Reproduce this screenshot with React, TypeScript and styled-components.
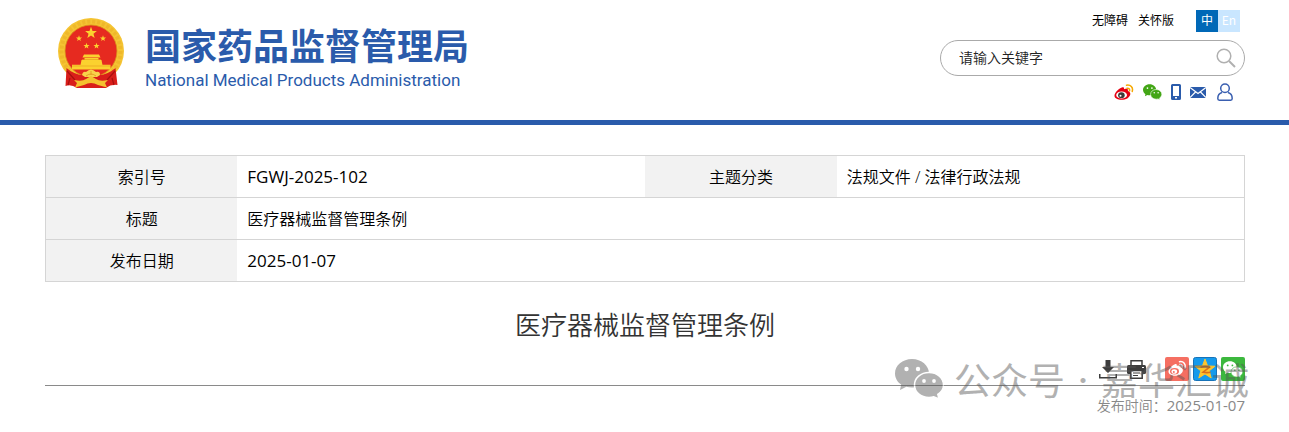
import React from "react";
import styled, { createGlobalStyle } from "styled-components";

const Global = createGlobalStyle`
  *, *::before, *::after { box-sizing: border-box; }
  body {
    margin: 0;
    background: #fff;
    color: #000;
    font-family: "Open Sans", "Noto Sans CJK SC", sans-serif;
    font-size: 16px;
  }
  a { color: inherit; text-decoration: none; }
  svg { display: block; }
`;

const Header = styled.header`
  display: flex;
  justify-content: space-between;
  height: 125px;
  padding: 10px 44px 0 45px;
  border-bottom: 5px solid #2a5bab;
`;

const Brand = styled.a`
  display: flex;
  align-items: flex-start;
  gap: 20px;
  padding: 8px 0 0 13px;
  color: #2a5bab;
`;

const BrandText = styled.div`
  display: flex;
  flex-direction: column;
  gap: 2px;
`;

const BrandName = styled.span`
  font: 700 36px/48px "Noto Sans CJK SC", sans-serif;
  white-space: nowrap;
  margin-top: 2px;
`;

const BrandLatin = styled.span`
  font: 400 17px/20px Roboto, sans-serif;
  white-space: nowrap;
`;

const Tools = styled.div`
  display: flex;
  flex-direction: column;
  width: 305px;
`;

const TopLinks = styled.nav`
  display: flex;
  justify-content: flex-end;
  align-items: flex-start;
  gap: 10px;
  height: 22px;
  padding-right: 5px;
  font: 400 12px/20px "Noto Sans CJK SC", sans-serif;
`;

const Languages = styled.div`
  display: flex;
  margin-left: 12px;
`;

const Language = styled.a<{ $active?: boolean }>`
  width: 22px;
  height: 22px;
  text-align: center;
  color: #fff;
  background: ${(p) => (p.$active ? "#0068b7" : "#c9e6ff")};
`;

const Search = styled.form`
  display: flex;
  align-items: center;
  height: 36px;
  margin-top: 8px;
  padding: 0 8px 0 18px;
  border: 1px solid #aaa;
  border-radius: 18px;
`;

const SearchInput = styled.input`
  flex: 1;
  min-width: 0;
  padding: 0 0 2px;
  border: 0;
  outline: 0;
  background: none;
  font: 350 14px/20px "Noto Sans CJK SC", sans-serif;
  color: #222;
  &::placeholder { color: #222; opacity: 1; }
`;

const IconButton = styled.button`
  display: block;
  padding: 0;
  border: 0;
  background: none;
  cursor: pointer;
`;

const Socials = styled.div`
  display: flex;
  justify-content: flex-end;
  align-items: center;
  gap: 9px;
  height: 20px;
  margin-top: 6px;
  padding-right: 12px;
  a:last-child { margin-left: 2px; }
`;

const Main = styled.main`
  padding: 30px 44px 16px 45px;
`;

const InfoTable = styled.table`
  width: 100%;
  table-layout: fixed;
  border-collapse: collapse;
  border: 1px solid #d5d5d5;
  tr { height: 42px; border-bottom: 1px solid #d5d5d5; }
`;

const Label = styled.th`
  padding: 0;
  background: #f2f2f2;
  font: 350 16px/24px "Open Sans", "Noto Sans CJK SC", sans-serif;
  text-align: center;
`;

const Value = styled.td<{ $latin?: boolean }>`
  padding: 0 10px;
  font: ${(p) => (p.$latin ? "400 17px/24px" : "350 16px/24px")} "Open Sans", "Noto Sans CJK SC", sans-serif;
`;

const Title = styled.h1`
  margin: 23px 0 0;
  font: 350 26px/38px "Noto Sans CJK SC", sans-serif;
  color: #333;
  text-align: center;
`;

const Actions = styled.div`
  position: relative;
  display: flex;
  justify-content: flex-end;
  align-items: flex-end;
  height: 43px;
  padding-bottom: 4px;
  border-bottom: 1px solid #8a8a8a;
`;

const ActionIcons = styled.div`
  display: flex;
  align-items: center;
  gap: 10px;
  height: 24px;
`;

const ShareIcons = styled.div`
  display: flex;
  gap: 4px;
  margin-left: 19px;
`;

const Published = styled.p`
  margin: 10px 0 0;
  font: 350 14px/18px "Noto Sans CJK SC", sans-serif;
  color: #888;
  text-align: right;
  time { font: 400 15px/18px "Open Sans", sans-serif; }
`;

const Watermark = styled.div`
  position: absolute;
  right: -4px;
  top: 16px;
  display: flex;
  align-items: center;
  height: 40px;
  font: 400 37px/40px "Noto Sans CJK SC", sans-serif;
  color: #555;
  opacity: 0.45;
  pointer-events: none;
  white-space: nowrap;
  svg { margin-right: 10px; }
`;

const Dot = styled.span`
  width: 36px;
  font-size: 24px;
  text-align: center;
`;

const star = (cx: number, cy: number, r: number) =>
  Array.from({ length: 10 }, (_, i) => {
    const a = (Math.PI / 5) * i - Math.PI / 2;
    const k = i % 2 ? r * 0.42 : r;
    return `${(cx + k * Math.cos(a)).toFixed(2)},${(cy + k * Math.sin(a)).toFixed(2)}`;
  }).join(" ");

const Emblem = () => (
  <svg width="67" height="70" viewBox="0 0 67 70" aria-hidden="true">
    <circle cx="33" cy="33" r="33" fill="#f5c433" />
    <circle cx="33" cy="33" r="29.500" fill="none" stroke="#e09a17" strokeWidth="4" strokeDasharray="3 2" opacity=".3" />
    <circle cx="33" cy="33" r="26" fill="#e62a20" stroke="#d9961a" strokeWidth=".8" />
    <g fill="#fbd12f">
      <polygon points={star(33, 15, 6.2)} />
      <polygon points={star(21, 20.5, 3.2)} />
      <polygon points={star(45, 20.5, 3.2)} />
      <polygon points={star(28.5, 28, 3.2)} />
      <polygon points={star(38.5, 28, 3.2)} />
      <path d="M26 36.500h15l1.500 3h-18zM26.500 40h14v2h-14zM23.500 42h20l1 5h-22zM14 46.800h38.500v4.700H14z" />
    </g>
    <path d="M14 48h38.500M24 41.500h19" stroke="#e59b1b" strokeWidth=".6" />
    <path d="M8.500 50Q20 60 33 56Q46 60 57.500 50L59.500 67Q53 66 48 70H19Q13 66 7.500 68z" fill="#d91e1a" />
    <path d="M9 53l8 9M57 53l-8 9M12 60l-2 7M54 60l2 7" stroke="#a8100f" strokeWidth="1.200" />
    <path d="M24 57q1-4 4-3 5-5 10 0 4-1 4 3l-3 2H27z" fill="#f8d24a" />
    <path d="M16 62q8 2 12-1l5-3 5 3q4 3 12 1l-3 3 2 4.500-9-2.500q-7-4-14 0l-9 2.500 2-4.500z" fill="#f5c12f" />
    <path d="M28 58q5-4 10 0M33 53v4" fill="none" stroke="#dd8e17" strokeWidth=".7" />
  </svg>
);

const WeiboColor = () => (
  <svg width="20" height="17" viewBox="0 0 20 17" aria-hidden="true">
    <path d="M8.500 3.300c1-.3 1.800.3 1.500 2 2-.8 4.600-.7 3.900 1.700 4 1.300 2.600 5.500-.6 7.400-4.300 2.500-12.300 1.700-12.800-2.400C.2 9 5.200 4.100 8.500 3.300z" fill="#e60012" />
    <ellipse cx="7.600" cy="11" rx="5.400" ry="3.600" fill="#fff" />
    <ellipse cx="7.400" cy="11.200" rx="3.300" ry="2.900" fill="#3e3a39" />
    <circle cx="6.500" cy="11.800" r="1" fill="#fff" />
    <path d="M12.500 1.200c4-.8 7 2.400 5.700 6.200M13 4.200c1.800-.3 3 .9 2.500 2.600" fill="none" stroke="#f5a800" strokeWidth="1.500" strokeLinecap="round" />
  </svg>
);

type WechatProps = { width: number; height: number; color: string; eye: string };
const Wechat = ({ width, height, color, eye }: WechatProps) => (
  <svg width={width} height={height} viewBox="0 0 49 40" aria-hidden="true">
    <path d="M17 0C7.500 0 0 6.400 0 14.500c0 4.600 2.400 8.500 6.200 11.100L5 31l6.300-3.200c1.800.5 3.700.8 5.700.8 9.500 0 17-6.200 17-14.100S26.500 0 17 0z" fill={color} />
    <path d="M34 13.500c-8.300 0-14.500 5.600-14.500 12.500S25.700 38.500 34 38.500c1.700 0 3.300-.2 4.800-.7L44 40l-1.200-4.600C46.200 33.200 48.500 30 48.500 26c0-6.900-6.200-12.500-14.500-12.500z" fill={color} stroke={eye} strokeWidth="1.500" />
    <g fill={eye}>
      <circle cx="11.500" cy="10" r="2.200" />
      <circle cx="23" cy="10" r="2.200" />
      <circle cx="29" cy="22" r="1.900" />
      <circle cx="39" cy="22" r="1.900" />
    </g>
  </svg>
);

const Phone = () => (
  <svg width="10" height="16" viewBox="0 0 10 16" aria-hidden="true">
    <path fillRule="evenodd" d="M1.500 0h7A1.500 1.500 0 0 1 10 1.500v13A1.500 1.500 0 0 1 8.500 16h-7A1.500 1.500 0 0 1 0 14.500v-13A1.500 1.500 0 0 1 1.500 0zM2 2v10h6V2zM4 13v1.500h2V13z" fill="#2a5bab" />
  </svg>
);

const Mail = () => (
  <svg width="16" height="11" viewBox="0 0 16 11" aria-hidden="true">
    <path d="M0 0h16v11H0z" fill="#2a5bab" />
    <path d="M0 .5l8 6 8-6M0 10.500l5.500-5.500M16 10.500L10.500 5" fill="none" stroke="#fff" strokeWidth="1.200" />
  </svg>
);

const User = () => (
  <svg width="16" height="18" viewBox="0 0 16 18" aria-hidden="true" fill="none" stroke="#3a5fb0" strokeWidth="1.500" strokeLinejoin="round">
    <circle cx="8" cy="5.200" r="4.300" />
    <path d="M5 9.500C2.200 10.300.8 12.500.8 15.500c0 1.200.4 1.700 1.500 1.700h11.400c1.100 0 1.500-.5 1.500-1.700 0-3-1.400-5.200-4.200-6" />
  </svg>
);

const Magnifier = () => (
  <svg width="20" height="20" viewBox="0 0 20 20" aria-hidden="true" fill="none" stroke="#b0b0b0" strokeWidth="1.500">
    <circle cx="8" cy="8" r="6.800" />
    <path d="M13 13l6 6" strokeWidth="2" />
  </svg>
);

const Download = () => (
  <svg width="18" height="19" viewBox="0 0 18 19" aria-hidden="true" fill="#3c3c3c">
    <path d="M6.500 0h5v7H15l-6 6-6-6h3.500zM0 14h1.500v3h15v-3H18v4.500H0z" />
  </svg>
);

const Printer = () => (
  <svg width="19" height="19" viewBox="0 0 19 19" aria-hidden="true">
    <path d="M4 .8h11V6H4z" fill="#fff" stroke="#3c3c3c" strokeWidth="1.500" />
    <rect y="5" width="19" height="9" rx="1.500" fill="#3c3c3c" />
    <path d="M3.800 10.500h11.400v7.700H3.800z" fill="#fff" stroke="#3c3c3c" strokeWidth="1.500" />
    <path d="M6 13h7M6 15.500h5" stroke="#3c3c3c" />
    <path d="M15 7.500h2" stroke="#fff" />
  </svg>
);

const WeiboShare = () => (
  <svg width="24" height="24" viewBox="0 0 24 24" aria-hidden="true">
    <rect width="24" height="24" rx="2" fill="#f56f62" />
    <path d="M10 7.200c1.200-.4 2.100.2 1.800 1.800 2-.8 4.500-.6 3.900 1.600 3.400 1.100 2.600 5-.6 6.900-4.200 2.400-11.200 1.200-11.600-2.500C3.200 12.300 7 8.200 10 7.200z" fill="#fff" />
    <ellipse cx="9.500" cy="14.300" rx="4.500" ry="3.200" fill="#f56f62" />
    <ellipse cx="9.300" cy="14.500" rx="2.800" ry="2.300" fill="#fff" />
    <circle cx="8.800" cy="15" r="1" fill="#f56f62" />
    <path d="M14.500 4.700c4-.7 6.800 2.600 5.500 6.300M14.800 7.600c1.700-.3 2.800 1 2.400 2.500" fill="none" stroke="#fff" strokeWidth="1.500" strokeLinecap="round" />
  </svg>
);

const QzoneShare = () => (
  <svg width="24" height="24" viewBox="0 0 24 24" aria-hidden="true">
    <rect x=".5" y=".5" width="23" height="23" rx="2" fill="#159aec" stroke="#1773b8" />
    <polygon points={star(12, 12.5, 10.5)} fill="#fdc52d" stroke="#fdc52d" strokeLinejoin="round" />
    <path d="M7.500 10.200q5-1.300 9 0l-6.500 5q4 .8 7.500 0" fill="none" stroke="#d9701c" strokeWidth="1.600" />
  </svg>
);

const WechatBox = styled.span`
  display: flex;
  align-items: center;
  justify-content: center;
  width: 24px;
  height: 24px;
  border-radius: 2px;
  background: #3cb83e;
`;

export default function App() {
  return (
    <>
      <Global />
      <Header>
        <Brand href="#">
          <Emblem />
          <BrandText>
            <BrandName>国家药品监督管理局</BrandName>
            <BrandLatin>National Medical Products Administration</BrandLatin>
          </BrandText>
        </Brand>
        <Tools>
          <TopLinks>
            <a href="#">无障碍</a>
            <a href="#">关怀版</a>
            <Languages>
              <Language href="#" $active>中</Language>
              <Language href="#">En</Language>
            </Languages>
          </TopLinks>
          <Search onSubmit={(e) => e.preventDefault()}>
            <SearchInput type="text" placeholder="请输入关键字" aria-label="请输入关键字" />
            <IconButton aria-label="搜索"><Magnifier /></IconButton>
          </Search>
          <Socials>
            <a href="#" aria-label="微博"><WeiboColor /></a>
            <a href="#" aria-label="微信"><Wechat width={19} height={16} color="#43a616" eye="#fff" /></a>
            <a href="#" aria-label="手机"><Phone /></a>
            <a href="#" aria-label="邮箱"><Mail /></a>
            <a href="#" aria-label="用户"><User /></a>
          </Socials>
        </Tools>
      </Header>
      <Main>
        <InfoTable>
          <colgroup>
            <col width="16%" />
            <col width="34%" />
            <col width="16%" />
            <col width="34%" />
          </colgroup>
          <tbody>
            <tr>
              <Label scope="row">索引号</Label>
              <Value $latin>FGWJ-2025-102</Value>
              <Label scope="row">主题分类</Label>
              <Value>法规文件 / 法律行政法规</Value>
            </tr>
            <tr>
              <Label scope="row">标题</Label>
              <Value colSpan={3}>医疗器械监督管理条例</Value>
            </tr>
            <tr>
              <Label scope="row">发布日期</Label>
              <Value colSpan={3} $latin>2025-01-07</Value>
            </tr>
          </tbody>
        </InfoTable>
        <Title>医疗器械监督管理条例</Title>
        <Actions>
          <ActionIcons>
            <IconButton aria-label="下载"><Download /></IconButton>
            <IconButton aria-label="打印"><Printer /></IconButton>
          </ActionIcons>
          <ShareIcons>
            <a href="#" aria-label="分享到微博"><WeiboShare /></a>
            <a href="#" aria-label="分享到QQ空间"><QzoneShare /></a>
            <a href="#" aria-label="分享到微信">
              <WechatBox><Wechat width={20} height={17} color="#fff" eye="#3cb83e" /></WechatBox>
            </a>
          </ShareIcons>
          <Watermark>
            <Wechat width={49} height={40} color="#555" eye="#fff" />
            公众号<Dot>·</Dot>嘉华汇诚
          </Watermark>
        </Actions>
        <Published>发布时间：<time>2025-01-07</time></Published>
      </Main>
    </>
  );
}
